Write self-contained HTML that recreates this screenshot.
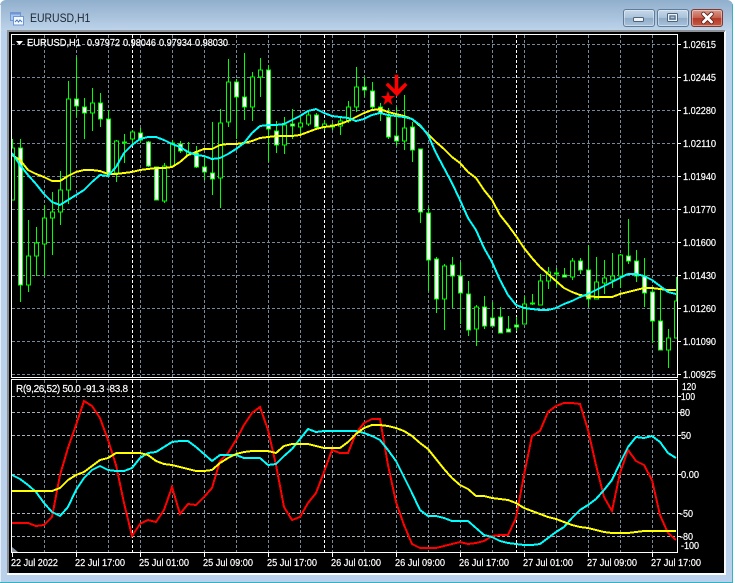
<!DOCTYPE html>
<html><head><meta charset="utf-8"><title>EURUSD,H1</title>
<style>
html,body{margin:0;padding:0;background:#fff;width:735px;height:583px;overflow:hidden}
#win{position:absolute;left:0;top:0;width:733px;height:582px;background:#b9d1ea;border-radius:6px 6px 0 0;overflow:hidden;border-bottom:1px solid #35b3c4;box-sizing:content-box}
#edgeL{position:absolute;left:0;top:5px;width:1px;height:577px;background:#e6edf4}
#edgeR{position:absolute;left:732px;top:4px;width:1px;height:578px;background:#35b3c4}
#tb{position:absolute;left:0;top:0;width:733px;height:31px;background:linear-gradient(#90afcd,#a3bdd8 40%,#bdd4ea)}
#frameL{position:absolute;left:7px;top:31px;width:2px;height:543px;background:#8a8f94}
#frameT{position:absolute;left:7px;top:30px;width:718px;height:2px;background:#8f9397}
#frameB{position:absolute;left:7px;top:573px;width:719px;height:2px;background:#fafcfe}
#frameR{position:absolute;left:724px;top:31px;width:2px;height:544px;background:#f4f8fc}
#title{position:absolute;left:30px;top:11px;font:12px "Liberation Sans",sans-serif;color:#1c2630;white-space:nowrap;width:60px;transform-origin:0 0;transform:scaleX(.87)}
.b{position:absolute;top:9px;height:18px;width:32px;box-sizing:border-box;border:1px solid #5f7b96;border-radius:3px;background:linear-gradient(#c6d8ea,#a9c2da 48%,#8fabc8 52%,#a8c3dc);box-shadow:inset 0 0 0 1px rgba(255,255,255,.4)}
#svg{position:absolute;left:0;top:0}
text{font-family:"Liberation Sans",sans-serif;font-size:10px;fill:#fff;stroke:#fff;stroke-width:.2}
</style></head><body>
<div id="win">
<div id="tb"></div>
<div id="edgeL"></div><div id="edgeR"></div>
<div id="frameL"></div><div id="frameR"></div><div id="frameT"></div><div id="frameB"></div>
<div id="title">EURUSD,H1</div>
<div class="b" style="left:623px"></div>
<div class="b" style="left:657px"></div>
<div class="b" style="left:691px;border-color:#7c3a30;background:linear-gradient(#d89a8c,#c9614e 48%,#b23a28 52%,#c65a45)"></div>
</div>
<svg id="svg" width="735" height="583" viewBox="0 0 735 583" xmlns="http://www.w3.org/2000/svg">
<defs>
<clipPath id="m"><rect x="12" y="35" width="665" height="341"/></clipPath>
<clipPath id="s"><rect x="12" y="380" width="665" height="172"/></clipPath>
</defs>
<!-- title icon -->
<rect x="10.5" y="12.5" width="10" height="8" fill="#a9c6ee" stroke="#6f97d4"/>
<rect x="10.5" y="12.5" width="10" height="2" fill="#6f97d4"/>
<rect x="13.5" y="16.5" width="10" height="8.5" fill="#f4f8ff" stroke="#6f97d4"/>
<path d="M15 22l2-2 1.500 2 1.500-2 2 2" fill="none" stroke="#4a74bb"/>
<!-- window buttons icons -->
<rect x="633.500" y="17.500" width="10" height="4" rx="1" fill="#f0f4f8" stroke="#4e6378"/>
<rect x="667.500" y="13.500" width="10" height="8" rx="1" fill="none" stroke="#4e6378"/>
<rect x="668.500" y="14.500" width="8" height="6" fill="none" stroke="#eef3f8"/>
<rect x="670" y="16" width="5" height="3" fill="none" stroke="#4e6378" stroke-width="1"/>
<path d="M703.500 14l8 8M711.500 14l-8 8" stroke="#5a2018" stroke-width="4.500" stroke-linecap="round" fill="none"/>
<path d="M703.500 14l8 8M711.500 14l-8 8" stroke="#fff" stroke-width="2.800" stroke-linecap="round" fill="none"/>
<!-- chart background -->
<rect x="9" y="32" width="715" height="541" fill="#000"/>
<!-- grid -->
<g shape-rendering="crispEdges" stroke="#778899" stroke-width="1" stroke-dasharray="3 2" fill="none">
<path d="M12 44.500H677M12 77.500H677M12 110.500H677M12 143.500H677M12 176.500H677M12 209.500H677M12 242.500H677M12 275.500H677M12 308.500H677M12 341.500H677M12 374.500H677"/>
<path stroke="#a8b0b8" d="M12 396.500H677M12 412.500H677M12 435.500H677M12 474.500H677M12 513.500H677M12 536.500H677"/>
<path d="M44.500 35V552M76.500 35V552M108.500 35V552M140.500 35V552M172.500 35V552M204.500 35V552M236.500 35V552M268.500 35V552M300.500 35V552M332.500 35V552M364.500 35V552M396.500 35V552M428.500 35V552M460.500 35V552M492.500 35V552M524.500 35V552M556.500 35V552M588.500 35V552M620.500 35V552M652.500 35V552"/>
</g>
<path shape-rendering="crispEdges" stroke="#fff" stroke-dasharray="3 2" d="M132.500 35V552M324.500 35V552M516.500 35V552" fill="none"/>
<!-- borders -->
<g fill="#fff" shape-rendering="crispEdges">
<rect x="11" y="34" width="667" height="1"/>
<rect x="11" y="34" width="1" height="343"/>
<rect x="677" y="34" width="1" height="343"/>
<rect x="11" y="377" width="667" height="1"/>
<rect x="11" y="379" width="667" height="1"/>
<rect x="11" y="379" width="1" height="174"/>
<rect x="677" y="379" width="1" height="174"/>
<rect x="11" y="552" width="667" height="1"/>
</g>
<!-- candles -->
<g clip-path="url(#m)" shape-rendering="crispEdges">
<path fill="none" stroke="#0f0" d="M12.500 139V200M20.500 139V302M28.500 220V292M36.500 227V276M44.500 205V276M52.500 192V255M60.500 171V225M68.500 81V204M76.500 57V117M84.500 98V139M92.500 88V131M100.500 93V127M108.500 110V177M116.500 140V182M124.500 134V163M132.500 130V144M140.500 128V143M148.500 141V167M156.500 167V200M164.500 163V203M172.500 140V166M180.500 141V153M188.500 142V156M196.500 146V168M204.500 157V180M212.500 122V195M220.500 109V208M228.500 59V127M236.500 79V139M244.500 53V120M252.500 72V121M260.500 58V97M268.500 65V162M276.500 121V153M284.500 117V154M292.500 109V139M300.500 117V136M308.500 112V126M316.500 113V128M324.500 120V130M332.500 123V130M340.500 117V135M348.500 101V123M356.500 67V112M364.500 77V97M372.500 82V110M380.500 103V121M388.500 108V139M396.500 107V146M404.500 95V150M412.500 122V162M420.500 149V223M428.500 207V291M436.500 257V313M444.500 264V330M452.500 257V308M460.500 262V324M468.500 281V336M476.500 305V346M484.500 296V329M492.500 302V326M500.500 307V333M508.500 316V332M516.500 317V331M524.500 296V324M532.500 294V305M540.500 274V305M548.500 267V289M556.500 268V287M564.500 268V277M572.500 258V280M580.500 258V274M588.500 245V307M596.500 257V299M604.500 260V294M612.500 253V288M620.500 254V288M628.500 219V264M636.500 250V282M644.500 258V307M652.500 288V343M660.500 290V350M668.500 329V368M676.500 277V338"/>
<path fill="#000" stroke="#0f0" d="M10.500 148h4v52h-4zM26.500 256h4v29h-4zM34.500 243h4v13h-4zM42.500 218h4v26h-4zM50.500 212h4v6h-4zM58.500 190h4v22h-4zM66.500 99h4v91h-4zM90.500 103h4v10h-4zM114.500 141h4v32h-4zM130.500 132h4v7h-4zM162.500 166h4v35h-4zM170.500 143h4v23h-4zM186.500 152h4v3h-4zM218.500 123h4v55h-4zM226.500 82h4v40h-4zM250.500 77h4v30h-4zM258.500 70h4v7h-4zM282.500 125h4v20h-4zM298.500 123h4v4h-4zM306.500 115h4v9h-4zM322.500 124h4v3h-4zM338.500 121h4v5h-4zM346.500 107h4v14h-4zM354.500 87h4v20h-4zM402.500 128h4v13h-4zM442.500 266h4v33h-4zM474.500 307h4v22h-4zM522.500 304h4v20h-4zM530.500 303h4v1h-4zM538.500 281h4v24h-4zM546.500 272h4v9h-4zM570.500 261h4v16h-4zM594.500 282h4v17h-4zM602.500 278h4v5h-4zM610.500 276h4v4h-4zM618.500 255h4v21h-4zM666.500 338h4v12h-4zM674.500 301h4v37h-4z"/>
<path fill="#fff" stroke="#0f0" d="M18.500 148h4v137h-4zM74.500 99h4v7h-4zM82.500 107h4v6h-4zM98.500 103h4v16h-4zM106.500 119h4v54h-4zM122.500 142h4v1h-4zM138.500 133h4v7h-4zM146.500 142h4v24h-4zM154.500 167h4v33h-4zM178.500 144h4v7h-4zM194.500 153h4v14h-4zM202.500 167h4v5h-4zM210.500 173h4v6h-4zM234.500 82h4v15h-4zM242.500 97h4v10h-4zM266.500 70h4v59h-4zM274.500 131h4v14h-4zM290.500 124h4v2h-4zM314.500 115h4v12h-4zM330.500 125h4v2h-4zM362.500 87h4v3h-4zM370.500 91h4v16h-4zM378.500 107h4v6h-4zM386.500 117h4v20h-4zM394.500 136h4v5h-4zM410.500 127h4v23h-4zM418.500 149h4v63h-4zM426.500 213h4v47h-4zM434.500 259h4v40h-4zM450.500 265h4v11h-4zM458.500 276h4v17h-4zM466.500 294h4v36h-4zM482.500 307h4v19h-4zM490.500 318h4v8h-4zM498.500 317h4v16h-4zM506.500 329h4v3h-4zM514.500 325h4v2h-4zM554.500 273h4v1h-4zM562.500 275h4v2h-4zM578.500 261h4v9h-4zM586.500 270h4v29h-4zM626.500 256h4v5h-4zM634.500 261h4v15h-4zM642.500 276h4v17h-4zM650.500 292h4v29h-4zM658.500 321h4v29h-4z"/>
<polyline fill="none" stroke="#ff0" stroke-width="2" points="12,155 20,160 28,170 36,174 44,177 52,181 60,181 68,176 76,172 84,170 92,170 100,171 108,174 116,174 124,173 132,172 140,170 148,169 156,168 164,168 172,167 180,162 188,155 196,152 204,149 212,149 220,145 228,144 236,144 244,143 252,141 260,138 268,137 276,136 284,136 292,136 300,135 308,132 316,129 324,127 332,126 340,124 348,121 356,117 364,113 372,110 380,109 388,112 396,114 404,116 412,119 420,126 428,134 436,142 444,149 452,157 460,163 468,172 476,178 484,190 492,200 500,215 508,225 516,236 524,248 532,258 540,267 548,274 556,281 564,288 572,292 580,295 588,296 596,297 604,297 612,297 620,294 628,292 636,290 644,288 652,288 660,289 668,290 676,290"/>
<polyline fill="none" stroke="#0ff" stroke-width="2" points="12,153 20,165 28,175 36,184 44,194 52,202 60,205 68,200 76,195 84,190 92,182 100,175 108,176 116,167 124,153 132,145 140,139 148,137 156,137 164,140 172,144 180,147 188,152 196,155 204,156 212,159 220,158 228,154 236,149 244,143 252,133 260,126 268,125 276,125 284,124 292,120 300,116 308,111 316,109 324,113 332,116 340,117 348,118 356,121 364,119 372,115 380,113 388,115 396,116 404,117 412,119 420,125 428,135 436,153 444,168 452,183 460,200 468,218 476,230 484,248 492,262 500,280 508,295 516,305 524,308 532,309 540,310 548,310 556,308 564,304 572,301 580,297 588,294 596,290 604,286 612,282 620,278 628,274 636,274 644,276 652,280 660,286 668,292 676,294"/>
</g>
<!-- arrow and star -->
<g fill="#f00">
<path d="M395 75h3v15l7-7 2 2-10 11-11-11 2-2 7 7z" stroke="#f00" stroke-width=".6"/>
<polygon points="388,91 389.800,96 395,96 390.800,99.200 392.500,105 388,101.500 383.500,105 385.200,99.200 381,96 386.200,96"/>
</g>
<!-- indicator lines -->
<g clip-path="url(#s)" shape-rendering="crispEdges" fill="none">
<polyline stroke="#f00" stroke-width="2" points="12,523 20,523 28,523 36,526 44,525 52,517 60,475 68,448 76,425 84,401 92,406 100,418 108,440 116,465 124,503 132,536 140,524 148,520 156,522 164,510 172,487 180,514 188,504 196,505 204,497 212,488 220,461 228,453 236,440 244,425 252,413 260,407 268,430 276,465 284,507 292,520 300,517 308,503 316,493 324,472 332,450 340,453 348,453 356,433 364,423 372,419 380,419 388,465 396,502 404,525 412,544 420,548 428,548 436,548 444,546 452,544 460,542 468,544 476,543 484,541 492,536 500,535 508,535 516,518 524,475 532,436 540,431 548,412 556,406 564,403 572,403 580,404 588,430 596,465 604,497 612,511 620,473 628,450 636,461 644,465 652,480 660,515 668,533 676,540"/>
<polyline stroke="#0ff" stroke-width="2" points="12,475 20,479 28,485 36,492 44,503 52,512 60,516 68,507 76,490 84,478 92,470 100,466 108,470 116,471 124,471 132,468 140,458 148,453 156,452 164,447 172,442 180,441 188,441 196,447 204,454 212,461 220,455 228,455 236,455 244,458 252,458 260,458 268,465 276,464 284,456 292,449 300,439 308,429 316,432 324,431 332,431 340,431 348,431 356,431 364,433 372,436 380,440 388,450 396,461 404,477 412,493 420,510 428,516 436,516 444,518 452,521 460,521 468,521 476,528 484,535 492,537 500,541 508,543 516,544 524,545 532,545 540,544 548,538 556,532 564,527 572,518 580,510 588,505 596,499 604,490 612,480 620,463 628,447 636,437 644,438 652,436 660,442 668,453 676,458"/>
<polyline stroke="#ff0" stroke-width="2" points="12,491 20,491 28,491 36,491 44,491 52,491 60,488 68,480 76,475 84,472 92,466 100,460 108,458 116,453 124,453 132,453 140,453 148,455 156,461 164,464 172,465 180,467 188,469 196,471 204,471 212,470 220,463 228,458 236,454 244,452 252,451 260,451 268,451 276,453 284,446 292,444 300,444 308,444 316,446 324,448 332,448 340,448 348,442 356,434 364,428 372,425 380,425 388,426 396,428 404,431 412,436 420,443 428,449 436,459 444,469 452,478 460,485 468,489 476,496 484,496 492,498 500,499 508,500 516,503 524,508 532,511 540,514 548,517 556,519 564,522 572,525 580,527 588,528 596,530 604,532 612,533 620,533 628,533 636,532 644,531 652,531 660,531 668,531 676,531"/>
</g>
<!-- small corner triangle + header triangle -->
<polygon points="12,547 12,552 18,552" fill="#8a93a0"/>
<polygon points="16,41 23,41 19.500,45" fill="#fff"/>
<!-- ticks -->
<path shape-rendering="crispEdges" stroke="#fff" fill="none" d="M678 44.500h3M678 77.500h3M678 110.500h3M678 143.500h3M678 176.500h3M678 209.500h3M678 242.500h3M678 275.500h3M678 308.500h3M678 341.500h3M678 374.500h3M678 396.500h3M678 412.500h3M678 435.500h3M678 474.500h3M678 513.500h3M678 536.500h3M12.500 553v4M76.500 553v4M140.500 553v4M204.500 553v4M268.500 553v4M332.500 553v4M396.500 553v4M460.500 553v4M524.500 553v4M588.500 553v4M652.500 553v4"/>
<!-- header text -->
<text x="27" y="46" textLength="54" lengthAdjust="spacingAndGlyphs">EURUSD,H1</text>
<text x="87" y="46" textLength="33" lengthAdjust="spacingAndGlyphs">0.97972</text>
<text x="123" y="46" textLength="33" lengthAdjust="spacingAndGlyphs">0.98046</text>
<text x="159" y="46" textLength="33" lengthAdjust="spacingAndGlyphs">0.97934</text>
<text x="195" y="46" textLength="33" lengthAdjust="spacingAndGlyphs">0.98030</text>
<text x="16" y="392" textLength="112" lengthAdjust="spacing">R(9,26,52) 50.0 -91.3 -83.8</text>
<!-- price axis -->
<g>
<text x="683" y="48" textLength="33" lengthAdjust="spacingAndGlyphs">1.02615</text>
<text x="683" y="81" textLength="33" lengthAdjust="spacingAndGlyphs">1.02445</text>
<text x="683" y="114" textLength="33" lengthAdjust="spacingAndGlyphs">1.02280</text>
<text x="683" y="147" textLength="33" lengthAdjust="spacingAndGlyphs">1.02110</text>
<text x="683" y="180" textLength="33" lengthAdjust="spacingAndGlyphs">1.01940</text>
<text x="683" y="213" textLength="33" lengthAdjust="spacingAndGlyphs">1.01770</text>
<text x="683" y="246" textLength="33" lengthAdjust="spacingAndGlyphs">1.01600</text>
<text x="683" y="279" textLength="33" lengthAdjust="spacingAndGlyphs">1.01430</text>
<text x="683" y="312" textLength="33" lengthAdjust="spacingAndGlyphs">1.01260</text>
<text x="683" y="345" textLength="33" lengthAdjust="spacingAndGlyphs">1.01090</text>
<text x="683" y="378" textLength="33" lengthAdjust="spacingAndGlyphs">1.00925</text>
<text x="682" y="390" textLength="14" lengthAdjust="spacingAndGlyphs">120</text>
<text x="681" y="400" textLength="14" lengthAdjust="spacingAndGlyphs">100</text>
<text x="680" y="416" textLength="10" lengthAdjust="spacingAndGlyphs">80</text>
<text x="681" y="439" textLength="10" lengthAdjust="spacingAndGlyphs">50</text>
<text x="681" y="478" textLength="18" lengthAdjust="spacingAndGlyphs">0.00</text>
<text x="680" y="517" textLength="13" lengthAdjust="spacingAndGlyphs">-50</text>
<text x="680" y="540" textLength="13" lengthAdjust="spacingAndGlyphs">-80</text>
<text x="681" y="549" textLength="18" lengthAdjust="spacingAndGlyphs">-100</text>
</g>
<!-- time axis -->
<g>
<text x="11" y="566" textLength="47" lengthAdjust="spacingAndGlyphs">22 Jul 2022</text>
<text x="75" y="566" textLength="50" lengthAdjust="spacingAndGlyphs">22 Jul 17:00</text>
<text x="139" y="566" textLength="50" lengthAdjust="spacingAndGlyphs">25 Jul 01:00</text>
<text x="203" y="566" textLength="50" lengthAdjust="spacingAndGlyphs">25 Jul 09:00</text>
<text x="267" y="566" textLength="50" lengthAdjust="spacingAndGlyphs">25 Jul 17:00</text>
<text x="331" y="566" textLength="50" lengthAdjust="spacingAndGlyphs">26 Jul 01:00</text>
<text x="395" y="566" textLength="50" lengthAdjust="spacingAndGlyphs">26 Jul 09:00</text>
<text x="459" y="566" textLength="50" lengthAdjust="spacingAndGlyphs">26 Jul 17:00</text>
<text x="523" y="566" textLength="50" lengthAdjust="spacingAndGlyphs">27 Jul 01:00</text>
<text x="587" y="566" textLength="50" lengthAdjust="spacingAndGlyphs">27 Jul 09:00</text>
<text x="651" y="566" textLength="50" lengthAdjust="spacingAndGlyphs">27 Jul 17:00</text>
</g>
</svg>
</body></html>
